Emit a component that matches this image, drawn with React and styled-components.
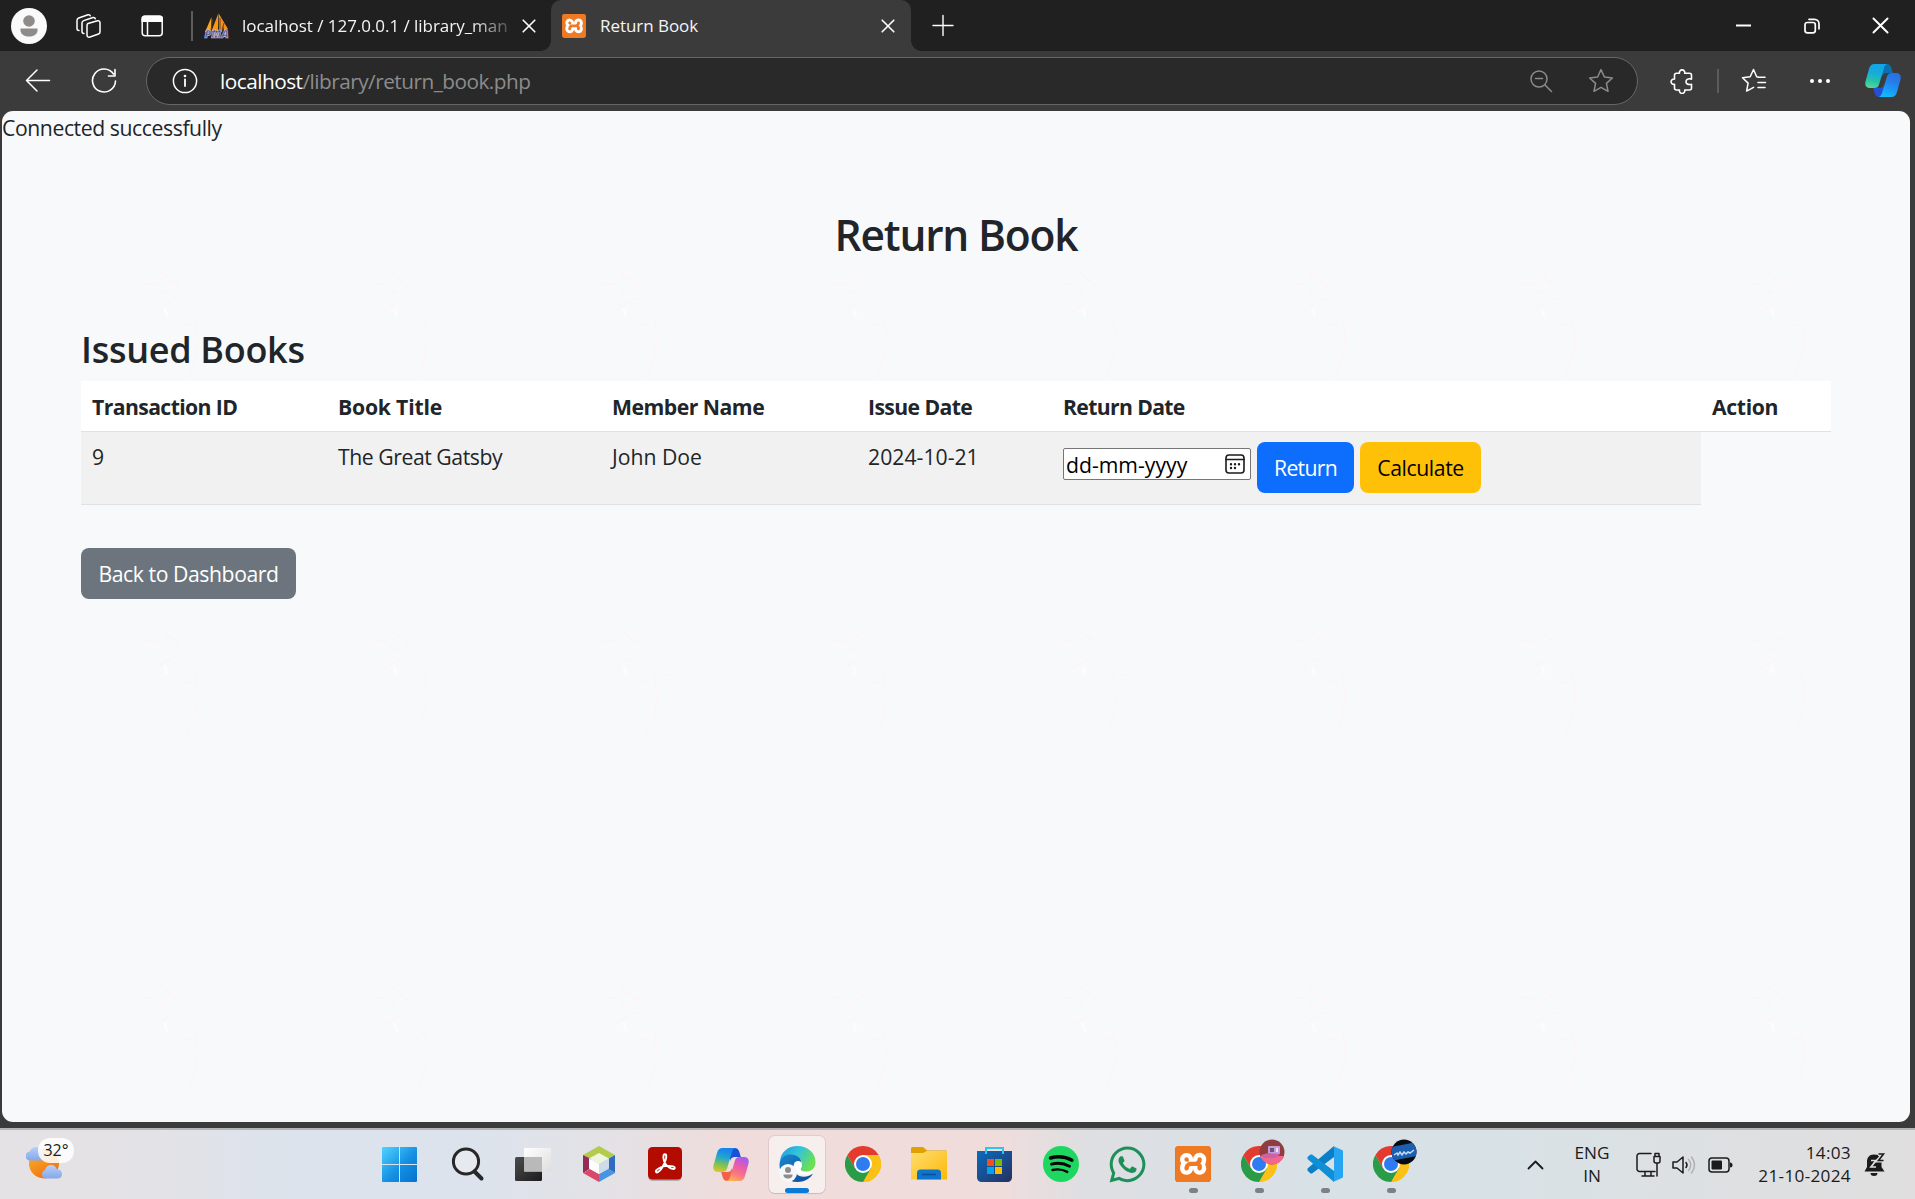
import React from "react";
import styled, { createGlobalStyle } from "styled-components";
import { FaWhatsapp } from "react-icons/fa";
import { SiXampp } from "react-icons/si";

const Global = createGlobalStyle`
  *, *::before, *::after { box-sizing: border-box; }
  html, body { margin: 0; padding: 0; overflow: hidden; background: #3b3b3b; }
  body { font-family: "Open Sans", "Noto Sans", sans-serif; color: #212529; }
`;

const Screen = styled.div`
  width: 1915px;
  height: 1199px;
  display: flex;
  flex-direction: column;
  background: #3b3b3b;
  overflow: hidden;
  white-space: nowrap;
`;

/* ---------- Tab strip ---------- */
const TabStrip = styled.div`
  height: 51px;
  flex: none;
  display: flex;
  align-items: center;
  background: #202020;
  color: #fff;
`;
const Avatar = styled.div`
  width: 36px;
  height: 36px;
  margin-left: 11px;
  svg { display: block; }
`;
const StripIcon = styled.div`
  width: 26px;
  height: 26px;
  margin-left: ${(p) => p.$gap}px;
  svg { display: block; }
`;
const Divider = styled.div`
  width: 2px;
  height: ${(p) => p.$h}px;
  margin: 0 ${(p) => p.$r}px 0 ${(p) => p.$l}px;
  background: #5c5c5c;
`;
const InactiveTab = styled.div`
  display: flex;
  align-items: center;
  width: 347px;
  height: 51px;
`;
const TabTitle = styled.div`
  width: ${(p) => p.$w}px;
  margin-left: ${(p) => p.$gap}px;
  font-size: 17px;
  line-height: 24px;
  letter-spacing: ${(p) => p.$ls || 0}px;
  color: #f4f4f4;
  ${(p) => p.$fade && "mask-image: linear-gradient(90deg, #000 86%, rgba(0,0,0,0.2) 100%);"}
`;
const TabClose = styled.div`
  margin-left: ${(p) => p.$gap}px;
  width: 14px;
  height: 14px;
  svg { display: block; }
`;
const ActiveTab = styled.div`
  position: relative;
  display: flex;
  align-items: center;
  width: 360px;
  height: 51px;
  padding-left: 11px;
  background: #3b3b3b;
  border-radius: 10px 10px 0 0;
  &::before, &::after {
    content: "";
    position: absolute;
    bottom: 0;
    width: 10px;
    height: 10px;
  }
  &::before { left: -10px; background: radial-gradient(circle at 0 0, #202020 9.5px, #3b3b3b 10px); }
  &::after { right: -10px; background: radial-gradient(circle at 100% 0, #202020 9.5px, #3b3b3b 10px); }
`;
const XamppTile = styled.div`
  width: ${(p) => p.$s}px;
  height: ${(p) => p.$s}px;
  flex: none;
  display: grid;
  place-items: center;
  overflow: hidden;
  border-radius: ${(p) => p.$s * 0.1}px;
  background: linear-gradient(#fff, #fff) center / 80% 80% no-repeat, #ef7a24;
  box-shadow: inset 0 0 0 1px #cf611d;
  svg { display: block; }
`;
const WindowControls = styled.div`
  margin-left: auto;
  display: flex;
  align-items: center;
  svg { display: block; }
`;
const Control = styled.div`
  width: 69px;
  height: 51px;
  display: grid;
  place-items: center;
`;

/* ---------- Toolbar ---------- */
const Toolbar = styled.div`
  height: 60px;
  flex: none;
  display: flex;
  align-items: center;
  svg { display: block; }
`;
const NavIcon = styled.div`
  width: 26px;
  height: 26px;
  margin-left: ${(p) => p.$gap}px;
`;
const AddressBar = styled.div`
  width: 1492px;
  height: 48px;
  margin-left: 29px;
  padding: 0 23px 0 25px;
  display: flex;
  align-items: center;
  border: 1.5px solid #666;
  border-radius: 24px;
  background: #292929;
`;
const Url = styled.div`
  margin: -1px auto 0 22px;
  font-size: 20.8px;
  line-height: 30px;
  letter-spacing: ${(p) => p.$ls}px;
  color: #8c8c8c;
  span { color: #fff; }
`;
const BarIcon = styled.div`
  margin-left: ${(p) => p.$gap}px;
  margin-bottom: ${(p) => p.$lift || 0}px;
  width: ${(p) => p.$w || 26}px;
  flex: none;
`;

/* ---------- Page ---------- */
const Page = styled.main`
  position: relative;
  width: 1908px;
  height: 1011px;
  flex: none;
  margin-left: 2px;
  background: #f8f9fb;
  border-radius: 11px;
  overflow: hidden;
`;
const Specks = styled.svg`
  position: absolute;
  inset: 0;
`;
const PageBody = styled.div`
  position: relative;
`;
const Status = styled.div`
  font-size: 21.2px;
  line-height: 33px;
  height: 34px;
  letter-spacing: ${(p) => p.$ls}px;
`;
const Container = styled.div`
  width: 1750px;
  margin-left: 79px;
`;
const Title = styled.h1`
  margin: 60px 0 0;
  text-align: center;
  font-size: 42.5px;
  font-weight: 600;
  line-height: 60px;
  letter-spacing: ${(p) => p.$ls}px;
`;
const Subtitle = styled.h2`
  margin: 62px 0 0;
  font-size: 36px;
  font-weight: 600;
  line-height: 46px;
  letter-spacing: ${(p) => p.$ls}px;
`;
const columns = "246px 274px 256px 195px 649px 130px";
const HeadRow = styled.div`
  display: grid;
  grid-template-columns: ${columns};
  height: 51px;
  margin-top: 8px;
  background: #fff;
  border-bottom: 1px solid #dee2e6;
`;
const HeadCell = styled.div`
  padding: 10px 11px 8px;
  font-weight: 700;
  font-size: 21.2px;
  line-height: 32px;
  letter-spacing: ${(p) => p.$ls}px;
`;
const BodyRow = styled.div`
  display: grid;
  grid-template-columns: ${columns};
  width: 1620px;
  height: 73px;
  background: #f1f1f1;
  border-bottom: 1px solid #dee2e6;
`;
const Cell = styled.div`
  padding: 8px 11px;
  font-size: 21.2px;
  line-height: 34px;
  letter-spacing: ${(p) => p.$ls || 0}px;
`;
const ActionCell = styled.div`
  display: flex;
  align-items: flex-start;
  gap: 6px;
  padding: 10px 11px;
`;
const DateField = styled.div`
  width: 188px;
  height: 32px;
  margin-top: 6px;
  padding: 0 5px 0 2px;
  display: flex;
  align-items: center;
  justify-content: space-between;
  background: #fff;
  border: 1.4px solid #767676;
  border-radius: 2px;
  color: #000;
  font-size: 21.2px;
  letter-spacing: ${(p) => p.$ls}px;
  svg { display: block; margin-top: -1px; }
  span { margin-top: 1px; }
`;
const Button = styled.button`
  width: ${(p) => p.$w}px;
  height: 51px;
  padding: 0;
  border: 0;
  border-radius: 8px;
  background: ${(p) => p.$bg};
  color: ${(p) => p.$fg || "#fff"};
  font: 400 21.2px "Open Sans", "Noto Sans", sans-serif;
  letter-spacing: ${(p) => p.$ls || 0}px;
  margin-top: ${(p) => p.$mt || 0}px;
`;

/* ---------- Taskbar ---------- */
const Taskbar = styled.footer`
  height: 71px;
  margin-top: 6px;
  flex: none;
  display: flex;
  border-top: 2px solid #b3b4b6;
  background: linear-gradient(90deg, #e4e2e4 0, #e4e2e6 130px, #dce3ec 290px, #dde3ec 480px, #e3e2e6 600px, #efdcdb 730px, #efdddc 1000px, #dedfe2 1085px, #d8e1e6 1300px, #d8e2e6 1500px, #dee0e2 1720px, #e0dedf 1915px);
  svg { display: block; }
`;
const Weather = styled.div`
  position: relative;
  width: 368px;
  padding: 15px 0 0 26px;
`;
const Temp = styled.div`
  position: absolute;
  left: 38px;
  top: 8px;
  width: 36px;
  height: 25px;
  border-radius: 12px;
  background: rgba(255, 255, 255, 0.85);
  font-size: 16px;
  line-height: 24px;
  text-align: center;
  color: #1b1b1b;
`;
const Apps = styled.div`
  display: flex;
`;
const AppSlot = styled.div`
  position: relative;
  width: 66px;
  height: 69px;
  padding-bottom: 1px;
  display: grid;
  place-items: center;
`;
const ActivePlate = styled.div`
  position: absolute;
  left: 5px;
  top: 6px;
  width: 56px;
  height: 57px;
  border-radius: 6px;
  background: rgba(255, 255, 255, 0.52);
  box-shadow: 0 0 0 1px rgba(120, 90, 90, 0.12), 0 1px 1px rgba(0, 0, 0, 0.1);
`;
const Indicator = styled.div`
  position: absolute;
  left: ${(p) => (p.$active ? 21 : 28.5)}px;
  top: 58px;
  width: ${(p) => (p.$active ? 24 : 9)}px;
  height: 5px;
  border-radius: 3px;
  background: ${(p) => (p.$active ? "#0a7ad6" : "#7d8184")};
`;
const Glyph = styled.div`
  position: relative;
  margin-left: ${(p) => p.$dx || 0}px;
`;
const Tray = styled.div`
  margin-left: auto;
  display: flex;
  align-items: center;
  padding-right: 29px;
  color: #1b1b1b;
`;
const Stack = styled.div`
  width: ${(p) => p.$w}px;
  margin: 0 0 2px ${(p) => p.$gap}px;
  font-size: 17.2px;
  line-height: 23px;
  letter-spacing: ${(p) => p.$ls || 0}px;
  text-align: ${(p) => p.$align};
`;
const TrayIcon = styled.div`
  margin-left: ${(p) => p.$gap}px;
`;

const Line = ({ w = 24, h = w, vb = "0 0 24 24", c = "#fff", s = 1.4, children }) => (
  <svg width={w} height={h} viewBox={vb} fill="none" stroke={c} strokeWidth={s} strokeLinecap="round" strokeLinejoin="round">
    {children}
  </svg>
);

const Cross = ({ size = 14, s = 1.6 }) => (
  <Line w={size} vb="0 0 14 14" s={s}><path d="M1.2 1.2l11.6 11.6M12.8 1.2L1.2 12.8" /></Line>
);

const XamppIcon = ({ size }) => (
  <XamppTile $s={size}><SiXampp size={size} color="#ef7a24" /></XamppTile>
);

const PmaIcon = () => (
  <svg width="26" height="26" viewBox="0 0 26 26" overflow="visible">
    <path d="M7.5 4L1 19h6z" fill="#f5a623" />
    <path d="M14.5 0L7.5 18h6.5z" fill="#f7941e" />
    <path d="M15 1l9 15-4 2-1-5-1 6h-3z" fill="#f78f1e" />
    <path d="M9 6l-2 11M16 5v13M20 10l-2 8" stroke="#5a3c1a" strokeWidth=".9" />
    <text x="0.5" y="25" textLength="24" lengthAdjust="spacingAndGlyphs" fontFamily="Open Sans, sans-serif" fontSize="10" fontWeight="800" fontStyle="italic" fill="#4b4f86" stroke="#c9cbea" strokeWidth=".6">PMA</text>
  </svg>
);

const ChromeIcon = () => (
  <svg width="36" height="36" viewBox="0 0 36 36">
    <path d="M18 18L33.6 9A18 18 0 0 1 18 36z" fill="#fbc116" />
    <path d="M18 9h15.6A18 18 0 0 1 18 36l7.8-13.5z" fill="#fbc116" />
    <path d="M2.41 9A18 18 0 0 0 18 36l7.8-13.5L18 18l-7.8 4.5z" fill="#2a9b47" />
    <path d="M2.41 9L10.2 22.5 18 9h15.6A18 18 0 0 0 2.41 9z" fill="#e33b2e" />
    <circle cx="18" cy="18" r="9" fill="#fff" />
    <circle cx="18" cy="18" r="7" fill="#2f7bf0" />
  </svg>
);

const Badge = styled.svg`
  position: absolute;
  right: -8px;
  top: -7px;
`;
const PinkBadge = () => (
  <Badge width="26" height="26" viewBox="0 0 26 26">
    <clipPath id="pinkClip"><circle cx="13" cy="13" r="12.5" /></clipPath>
    <g clipPath="url(#pinkClip)">
      <rect width="26" height="26" fill="#8f3d3f" />
      <path d="M0 17h26v9H0z" fill="#f5668e" />
      <rect x="9" y="7" width="12" height="8" rx="1" fill="#c79ad8" />
      <rect x="11" y="9" width="4" height="4" fill="#6c5578" />
      <rect x="17" y="9" width="2" height="4" fill="#efe0f5" />
      <path d="M2 16l7-2 12 1-4 4H5z" fill="#c765a4" />
    </g>
  </Badge>
);
const BlueBadge = () => (
  <Badge width="26" height="26" viewBox="0 0 26 26">
    <clipPath id="blueClip"><circle cx="13" cy="13" r="12.5" /></clipPath>
    <g clipPath="url(#blueClip)">
      <rect width="26" height="26" fill="#070b14" />
      <path d="M0 8L26 3v14L0 22z" fill="#1c5fae" />
      <path d="M3 16l3-2 1 2 2-3 2 3 2-3 2 2 2-2 2 1 4-3" stroke="#c4dcf5" strokeWidth="1.500" fill="none" />
    </g>
  </Badge>
);

const WindowsIcon = () => (
  <svg width="35" height="35" viewBox="0 0 35 35">
    <defs><linearGradient id="win" gradientUnits="userSpaceOnUse" x1="0" y1="0" x2="35" y2="35"><stop stopColor="#4fd3ff" /><stop offset=".55" stopColor="#1590e2" /><stop offset="1" stopColor="#0572d0" /></linearGradient></defs>
    <path fill="url(#win)" d="M1 0h16v17H0V1a1 1 0 0 1 1-1zM18 0h16a1 1 0 0 1 1 1v16H18zM0 18h17v17H1a1 1 0 0 1-1-1zM18 18h17v16a1 1 0 0 1-1 1H18z" />
  </svg>
);
const SearchIcon = () => (
  <svg width="34" height="36" viewBox="0 0 34 36" fill="none" stroke="#272727">
    <circle cx="15" cy="15.5" r="12.6" strokeWidth="3" fill="#e6e9ef" />
    <path d="M23.5 25.5l7 7" strokeWidth="4" strokeLinecap="round" />
  </svg>
);
const TaskViewIcon = () => (
  <svg width="36" height="36" viewBox="0 0 36 36">
    <defs><linearGradient id="tvd" x1="0" y1="0" x2="1" y2="1"><stop stopColor="#4c4c4c" /><stop offset="1" stopColor="#1c1c1c" /></linearGradient><linearGradient id="tvl" x1="0" y1="0" x2="1" y2="1"><stop stopColor="#fff" /><stop offset="1" stopColor="#dedede" /></linearGradient></defs>
    <rect x="0" y="11" width="27" height="24" rx="1.5" fill="url(#tvd)" />
    <rect x="9" y="2" width="27" height="23.5" rx="1" fill="url(#tvl)" />
    <path d="M9 11h18v14.500H9z" fill="#b9b9b9" />
  </svg>
);
const NetBeansIcon = () => (
  <svg width="32" height="36" viewBox="0 0 32 36">
    <path d="M16 0l16 9-16 9L0 9z" fill="#b2cb4b" />
    <path d="M0 9l8 4v9L0 27z" fill="#942a55" />
    <path d="M0 27l7-4 9 5v8z" fill="#d9476b" />
    <path d="M32 9l-7 4v10l7 4z" fill="#2f6cbf" />
    <path d="M32 27l-7-4-9 5v8z" fill="#4694e4" />
    <path d="M16 7l10 5.500-10 5.500-10-5.500z" fill="#eff4df" />
    <path d="M6 12.500l10 5.500v10L6 22.500z" fill="#fdfdfd" />
    <path d="M26 12.500l-10 5.500v10l10-5.500z" fill="#cfdbe8" />
  </svg>
);
const AcrobatIcon = () => (
  <svg width="34" height="34" viewBox="0 0 34 34">
    <rect y="1" width="34" height="33" rx="4.500" fill="#7b8085" opacity=".5" />
    <rect width="34" height="32.500" rx="4.500" fill="#b30b00" />
    <path d="M16.600 7.200c2-.4 2.200 2.600.8 6.400-1.700 4.700-4.800 10-7.600 11.600-1.600.8-2.700-.6-1.400-2 2.200-2.300 7.300-4.200 12.200-4.300 3.300-.1 6.400.5 6.200 2-.2 1.700-3.400 1.200-5.900-.7-3-2.200-5.200-5.700-5.500-9.500-.1-2 .3-3.300 1.200-3.500z" fill="none" stroke="#fff" strokeWidth="1.900" strokeLinejoin="round" />
  </svg>
);
const CopilotIcon = ({ color }) => {
  const id = color ? "cc" : "cb";
  const left = color ? ["#1684ec", "#21a4d4", "#7fc250", "#e7c72a"] : ["#10a6e8", "#18aadc", "#25c3a9", "#5fd990"];
  const right = color ? ["#a45cf0", "#e45ab0", "#f87483", "#fbb058"] : ["#2b6fe0", "#257de8", "#1a9af8", "#14bdf6"];
  return (
    <svg width="36" height="33" viewBox="0 0 36 33">
      <defs>
        <linearGradient id={id + "l"} x1=".3" y1="0" x2=".1" y2="1">{left.map((c, i) => <stop key={c} offset={i / 3} stopColor={c} />)}</linearGradient>
        <linearGradient id={id + "r"} x1=".7" y1="0" x2=".3" y2="1">{right.map((c, i) => <stop key={c} offset={i / 3} stopColor={c} />)}</linearGradient>
      </defs>
      <path d="M17 0h4.500c2.800 0 4 1.300 4.800 3.800l1.500 5.200H22c-3 0-4 1-5 4z" fill={color ? "#1b50d8" : "#0c6fae"} />
      <path d="M19 33h-4.500c-2.800 0-4-1.300-4.800-3.800L8.200 24H14c3 0 4-1 5-4z" fill={color ? "#f5604a" : "#244fd6"} />
      <path d="M9.500 0H23c-2 0-3.200 1.200-4 4l-4.800 16c-.9 3-2.200 4-5 4H5C1.300 24-.4 21.500.5 17.500L4 5C5 1.700 6.600 0 9.500 0z" fill={`url(#${id}l)`} />
      <path d="M26.500 33H13c2 0 3.200-1.200 4-4l4.800-16c.9-3 2.200-4 5-4H31c3.700 0 5.400 2.500 4.500 6.500L32 28c-1 3.300-2.600 5-5.500 5z" fill={`url(#${id}r)`} />
    </svg>
  );
};
const EdgeIcon = () => (
  <svg width="37" height="36" viewBox="0 0 37 36">
    <defs>
      <linearGradient id="eg1" x1="0" y1="0" x2="1" y2=".5"><stop stopColor="#2298d8" /><stop offset=".5" stopColor="#33c3dc" /><stop offset="1" stopColor="#6be052" /></linearGradient>
      <linearGradient id="eg2" x1="0" y1="0" x2="1" y2="1"><stop stopColor="#1b87d3" /><stop offset="1" stopColor="#0b4a92" /></linearGradient>
    </defs>
    <path d="M1 15C2 6 9 0 18.500 0 29 0 36.500 7 36.500 16c0 6-4 9.500-9 9.500-4 0-6-1.300-6-2.500 0-1 1.500-1.800 1.500-5 0-5-4.500-9-11-9C7 9 3 11 1 15z" fill="url(#eg1)" />
    <path d="M.5 18C1 11 6 8.500 11.500 8.500c6 0 10.500 3 11 8-2-2-5.500-2-7 .5-3 5 0 11 5 13 4.500 1.800 9 .5 13.500-2.500C31 33 25 36 18.500 36 8 36 0 28 .5 18z" fill="url(#eg2)" />
    <path d="M15.500 17c-2 6 2 11 8 11.500 4 .3 8-.5 11-2.500-1-.5-3 .5-7 .5-5 0-6.500-2-6-3.500 1.500-1.500 2-6-1-7-2-.6-4 0-5 1z" fill="#fff" />
    <circle cx="9" cy="27" r="9" fill="#f7f7f7" />
    <circle cx="9" cy="24" r="3" fill="#8d8d8d" />
    <path d="M4.500 28.500h9c.5 2.500-2 4-4.500 4s-5-1.500-4.500-4z" fill="#8d8d8d" />
  </svg>
);
const FolderIcon = () => (
  <svg width="36" height="34" viewBox="0 0 36 34">
    <defs><linearGradient id="fo" x1="0" y1="0" x2="1" y2="1"><stop stopColor="#ffde70" /><stop offset="1" stopColor="#fcb808" /></linearGradient></defs>
    <path d="M0 1.500A1.500 1.500 0 0 1 1.500 0H12l4 3.500h19a1 1 0 0 1 1 1V8H0z" fill="#dfa000" />
    <path d="M0 8.500V6h12l4-2h20v28.500H0z" fill="url(#fo)" />
    <path d="M6 32.500V26a3.500 3.500 0 0 1 3.500-3.500h17A3.500 3.500 0 0 1 30 26v6.500z" fill="#0f75cc" />
    <path d="M11 27.500h14" stroke="#0a4f9a" strokeWidth="1.500" />
  </svg>
);
const StoreIcon = () => (
  <svg width="35" height="35" viewBox="0 0 35 35">
    <defs><linearGradient id="st" x1="0" y1="0" x2="1" y2="1"><stop stopColor="#0a6cbf" /><stop offset="1" stopColor="#27305e" /></linearGradient></defs>
    <path d="M0 4h35v26.500a4.500 4.500 0 0 1-4.500 4.500h-26A4.500 4.500 0 0 1 0 30.500z" fill="url(#st)" />
    <path d="M9 7V1h17v6" fill="none" stroke="#2fc3f0" strokeWidth="2" />
    <path d="M10 12h7v7h-7z" fill="#f25022" /><path d="M18 12h7v7h-7z" fill="#7fba00" />
    <path d="M10 20h7v7h-7z" fill="#00a4ef" /><path d="M18 20h7v7h-7z" fill="#ffb900" />
  </svg>
);
const VsCodeIcon = () => (
  <svg width="36" height="36" viewBox="0 0 36 36">
    <path d="M27 0v11L5 27.500l-1.500-.1L.5 24.500v-2z" fill="#0a7fc8" />
    <path d="M27 36V25L5 8.500l-1.500.1L.5 11v2z" fill="#0f8fd6" />
    <path d="M26 0l9 4a1.500 1.500 0 0 1 1 1.500v25a1.500 1.500 0 0 1-1 1.500l-9 4 1-2.500v-31z" fill="#27a5f3" />
  </svg>
);
const SpotifyIcon = () => (
  <svg width="36" height="36" viewBox="0 0 36 36" fill="none" stroke="#060606" strokeLinecap="round">
    <circle cx="18" cy="18" r="18" fill="#1ed760" stroke="none" />
    <path d="M7.500 12c7-2 15-1.300 21.500 2.300" strokeWidth="3.400" />
    <path d="M8.500 18.200c6-1.700 12.500-1 18 2.100" strokeWidth="2.900" />
    <path d="M9.500 24c5-1.200 10-.7 14.800 1.900" strokeWidth="2.400" />
  </svg>
);
const WeatherIcon = () => (
  <svg width="40" height="36" viewBox="0 0 40 36">
    <defs><linearGradient id="sun" x1="0" y1="0" x2=".6" y2="1"><stop stopColor="#f8b930" /><stop offset="1" stopColor="#f2700e" /></linearGradient><linearGradient id="cl" x1="0" y1="0" x2="0" y2="1"><stop stopColor="#b7d0fa" /><stop offset="1" stopColor="#84a7ea" /></linearGradient></defs>
    <circle cx="18" cy="18.500" r="15" fill="url(#sun)" />
    <path d="M4 15.500a4.500 4.500 0 0 1 0-9C5 3 8 2 11 2s5 2 6 5v8.500z" fill="url(#cl)" />
    <path d="M19 33.500a4.500 4.500 0 0 1 0-8.500c1-4 4-5 6.500-5s4.500 1.500 5.500 4.500c3-.5 5 1.500 5 4.500s-2 4.500-4.500 4.500z" fill="url(#cl)" />
  </svg>
);

const apps = [
  { key: "start", icon: <WindowsIcon />, dx: -3 },
  { key: "search", icon: <SearchIcon />, dx: 1 },
  { key: "taskview", icon: <TaskViewIcon /> },
  { key: "netbeans", icon: <NetBeansIcon /> },
  { key: "acrobat", icon: <AcrobatIcon /> },
  { key: "copilot", icon: <CopilotIcon color /> },
  { key: "edge", icon: <EdgeIcon />, active: true },
  { key: "chrome", icon: <ChromeIcon /> },
  { key: "files", icon: <FolderIcon /> },
  { key: "store", icon: <StoreIcon />, dx: -2 },
  { key: "spotify", icon: <SpotifyIcon /> },
  { key: "whatsapp", icon: <FaWhatsapp size={41} color="#1d9059" /> },
  { key: "xampp", icon: <XamppIcon size={36} />, open: true },
  { key: "chrome-a", icon: <><ChromeIcon /><PinkBadge /></>, open: true },
  { key: "vscode", icon: <VsCodeIcon />, open: true },
  { key: "chrome-b", icon: <><ChromeIcon /><BlueBadge /></>, open: true },
];

export default function App() {
  return (
    <>
      <Global />
      <Screen>
        <TabStrip>
          <Avatar>
            <svg width="36" height="36" viewBox="0 0 36 36">
              <circle cx="18" cy="18" r="18" fill="#fafafa" />
              <circle cx="18" cy="13" r="5.800" fill="#8f8b89" />
              <path d="M9.500 20.500h17c.8 5.500-3.500 8-8.500 8s-9.300-2.500-8.500-8z" fill="#8f8b89" />
            </svg>
          </Avatar>
          <StripIcon $gap={29}>
            <Line w={26} vb="0 0 26 26" s={1.5}>
              <path d="M12 10.500l9.500-2.700c1.300-.4 2.500.4 2.500 1.700v9.500c0 1-.6 1.700-1.500 2L14 24c-1.600.5-3-.4-3-2v-9.500c0-1 .3-1.700 1-2z" />
              <path d="M8 20.500c-1.300 0-2-.8-2-2V10c0-1.200.6-2 1.700-2.400L17 4.500c1.200-.3 2 .2 2.300 1.200" />
              <path d="M3 17.500c-1.200 0-2-.8-2-2V7.400c0-1.200.6-2 1.700-2.400L12 1.800c1.200-.3 2 .2 2.300 1" />
            </Line>
          </StripIcon>
          <StripIcon $gap={38}>
            <svg width="24" height="26" viewBox="0 0 24 26">
              <rect x="2.200" y="3.200" width="20" height="19.600" rx="3" fill="none" stroke="#fff" strokeWidth="1.500" />
              <path d="M1.500 9V5.500a3 3 0 0 1 3-3h15.500a3 3 0 0 1 3 3V9z" fill="#fff" />
              <path d="M7.500 9v13.500" stroke="#fff" strokeWidth="1.500" />
            </svg>
          </StripIcon>
          <Divider $h={30} $l={25} $r={11} />
          <InactiveTab>
            <PmaIcon />
            <TabTitle $gap={12} $w={267} $fade $ls={-0.04}>localhost / 127.0.0.1 / library_man</TabTitle>
            <TabClose $gap={13}><Cross /></TabClose>
          </InactiveTab>
          <ActiveTab>
            <XamppIcon size={24} />
            <TabTitle $gap={14} $w={268} $ls={-0.05}>Return Book</TabTitle>
            <TabClose $gap={13}><Cross /></TabClose>
          </ActiveTab>
          <StripIcon $gap={19}>
            <Line w={26} vb="0 0 26 26"><path d="M13 2.500v20M3 12.500h20" /></Line>
          </StripIcon>
          <WindowControls>
            <Control><svg width="16" height="16"><path d="M1 7.500h15" stroke="#fff" strokeWidth="2" /></svg></Control>
            <Control>
              <Line w={16} vb="0 0 16 16" s={1.7}><rect x="1" y="4.500" width="10.300" height="10.300" rx="2.300" /><path d="M5 1.300h5.500a4.500 4.500 0 0 1 4.500 4.500v5" /></Line>
            </Control>
            <Control><Cross size={17} s={1.6} /></Control>
          </WindowControls>
        </TabStrip>

        <Toolbar>
          <NavIcon $gap={25}>
            <Line w={26} vb="0 0 26 26" s={1.5}><path d="M24.500 12.500H1.500M12 2L1.500 12.500 12 23" /></Line>
          </NavIcon>
          <NavIcon $gap={40}>
            <Line w={26} vb="0 0 26 26" s={1.600}><path d="M22.500 6A11.500 11.500 0 1 0 24.500 13M24 1.500V8h-6.500" /></Line>
          </NavIcon>
          <AddressBar>
            <Line w={26} vb="0 0 26 26" s={1.5}><circle cx="13" cy="13" r="11.600" /><path d="M13 11.500v6.500" strokeWidth="1.800" /><circle cx="13" cy="8" r=".6" fill="#fff" /></Line>
            <Url $ls={-0.52}><span>localhost</span>/library/return_book.php</Url>
            <BarIcon $gap={0}>
              <Line w={24} vb="0 0 24 24" c="#8b8b8b" s={1.5}><circle cx="10" cy="10" r="8" /><path d="M16 16l6.500 6.500M6.500 9.500h7" /></Line>
            </BarIcon>
            <BarIcon $gap={33}>
              <Line w={26} vb="0 0 24 24" c="#8b8b8b" s={1.400}><path d="M12 1.500l3.100 6.800 7.400.9-5.500 5 1.500 7.300L12 17.900l-6.500 3.600L7 14.200l-5.500-5 7.400-.9z" /></Line>
            </BarIcon>
          </AddressBar>
          <BarIcon $gap={31}>
            <Line w={25} vb="0 0 25 25" s={1.600}>
              <path d="M7.500 4.300h3a2.700 2.700 0 1 1 5.200 0h4.800a2 2 0 0 1 2 2v3.800c-4-1-5.500 1-5.500 2.600s1.500 3.600 5.500 2.600V19a2 2 0 0 1-2 2h-4.800a2.700 2.700 0 1 1-5.200 0h-3a2 2 0 0 1-2-2v-3.700a2.700 2.700 0 1 1 0-5.200V6.300a2 2 0 0 1 2-2z" />
            </Line>
          </BarIcon>
          <Divider $h={24} $l={22} $r={22} />
          <BarIcon $gap={0}>
            <Line w={26} vb="0 0 26 26" s={1.500}><path d="M17 9l-1.300-.3L12.500 1.500 9.200 8.700l-7.700 1 5.600 5.400-1.500 8 7-3.700M17 9.300h7M17 14.500h7.500M17 19.500h7" /></Line>
          </BarIcon>
          <BarIcon $gap={40}>
            <svg width="26" height="6" fill="#fff"><circle cx="5" cy="3" r="2" /><circle cx="13" cy="3" r="2" /><circle cx="21" cy="3" r="2" /></svg>
          </BarIcon>
          <BarIcon $gap={32} $w={36} $lift={2}><CopilotIcon /></BarIcon>
        </Toolbar>

        <Page>
          <Specks width="1908" height="1011">
            <defs>
              <pattern id="specks" x="143" y="157" width="229.500" height="357" patternUnits="userSpaceOnUse">
                <g fill="none" stroke="#fdf5f5" strokeLinecap="round">
                  <path d="M17 5l17 14" strokeWidth="2" />
                  <path d="M50 50c5 20 2 42-8 60" strokeWidth="1.500" />
                  <path d="M1 16h9M17 22l4 2M10 43l8-5 7-4M30 31h4M39 57h5M61 50h3M14 64v1" strokeWidth="2" />
                  <path d="M20 42l2 6" stroke="#fdfdfd" strokeWidth="2.500" strokeDasharray="1 2" />
                </g>
              </pattern>
            </defs>
            <rect y="157" width="1908" height="854" fill="url(#specks)" />
          </Specks>
          <PageBody>
            <Status $ls={-0.42}>Connected successfully</Status>
            <Container>
              <Title $ls={-1.2}>Return Book</Title>
              <Subtitle $ls={-0.3}>Issued Books</Subtitle>
              <HeadRow>
                <HeadCell $ls={-0.6}>Transaction ID</HeadCell>
                <HeadCell $ls={-0.2}>Book Title</HeadCell>
                <HeadCell $ls={-0.5}>Member Name</HeadCell>
                <HeadCell $ls={-0.6}>Issue Date</HeadCell>
                <HeadCell $ls={-0.65}>Return Date</HeadCell>
                <HeadCell $ls={-0.35}>Action</HeadCell>
              </HeadRow>
              <BodyRow>
                <Cell>9</Cell>
                <Cell $ls={-0.45}>The Great Gatsby</Cell>
                <Cell $ls={0}>John Doe</Cell>
                <Cell $ls={0.02}>2024-10-21</Cell>
                <ActionCell>
                  <DateField $ls={0}>
                    <span>dd-mm-yyyy</span>
                    <Line w={20} vb="0 0 20 20" c="#1c1c1c" s={1.600}>
                      <rect x="1" y="1" width="18" height="18" rx="3" /><path d="M1 5.500h18" />
                      <path d="M6 10.200h.01M10 10.200h.01M14 10.200h.01M6 14h.01M10 14h.01" strokeWidth="2.400" />
                    </Line>
                  </DateField>
                  <Button $w={97} $bg="#0d6efd" $ls={-0.7}>Return</Button>
                  <Button $w={121} $bg="#ffc107" $fg="#000" $ls={-0.4}>Calculate</Button>
                </ActionCell>
              </BodyRow>
              <Button $w={215} $bg="#6c757d" $mt={43} $ls={-0.42}>Back to Dashboard</Button>
            </Container>
          </PageBody>
        </Page>

        <Taskbar>
          <Weather>
            <WeatherIcon />
            <Temp>32°</Temp>
          </Weather>
          <Apps>
            {apps.map((a) => (
              <AppSlot key={a.key}>
                {a.active && <ActivePlate />}
                <Glyph $dx={a.dx}>{a.icon}</Glyph>
                {(a.active || a.open) && <Indicator $active={a.active} />}
              </AppSlot>
            ))}
          </Apps>
          <Tray>
            <Line w={17} h={10} vb="0 0 17 10" c="#1b1b1b" s={1.800}><path d="M1.500 8.500l7-7 7 7" /></Line>
            <Stack $w={50} $gap={23} $align="center">ENG<br />IN</Stack>
            <TrayIcon $gap={19}>
              <Line w={25} vb="0 0 25 25" c="#1b1b1b" s={1.500}>
                <path d="M15 1.500H3.500a2.500 2.500 0 0 0-2.500 2.500v13a2.500 2.500 0 0 0 2.500 2.500H19M9 19.500v4M15 19.500v4M6 24h12M21 11v13M18 4.500h6V9a2 2 0 0 1-2 2h-2a2 2 0 0 1-2-2zM19 4.500v-3h4v3" />
              </Line>
            </TrayIcon>
            <TrayIcon $gap={11}>
              <Line w={25} vb="0 0 25 20" h={20} c="#1b1b1b" s={1.500}>
                <path d="M1 7v6h4l6 5V2L5 7z" /><path d="M14 7.500q2 2.500 0 5" />
                <path d="M16.500 4.500q4.500 5.500 0 11M19.500 2q6 8 0 16" stroke="#adb1b4" />
              </Line>
            </TrayIcon>
            <TrayIcon $gap={11}>
              <svg width="25" height="16" viewBox="0 0 25 16"><rect x="1" y="1" width="20" height="14" rx="3" fill="none" stroke="#1b1b1b" strokeWidth="1.500" /><rect x="3.500" y="3.500" width="10.500" height="9" rx="1" fill="#1b1b1b" /><path d="M22 5.500q2.500 0 2.500 2.500T22 10.500z" fill="#1b1b1b" /></svg>
            </TrayIcon>
            <Stack $w={110} $gap={8} $align="right" $ls={0.3}>14:03<br />21-10-2024</Stack>
            <TrayIcon $gap={13}>
              <svg width="22" height="24" viewBox="0 0 22 24" fill="#1b1b1b">
                <path d="M10 1.500C5 1.500 3 5 3 8.500V14l-2.500 4.500h20L17.500 14V9l-3-7z" /><path d="M6.500 20h7a3.500 3 0 0 1-7 0z" />
                <path d="M7 7.500h5l-5 6.500h5" fill="none" stroke="#dfdfe1" strokeWidth="1.700" />
                <path d="M14 1h6l-6 6.500h6" fill="none" stroke="#dfdfe1" strokeWidth="4" />
                <path d="M14.500 1h5l-5 6.500h5" fill="none" stroke="#1b1b1b" strokeWidth="1.600" />
              </svg>
            </TrayIcon>
          </Tray>
        </Taskbar>
      </Screen>
    </>
  );
}
